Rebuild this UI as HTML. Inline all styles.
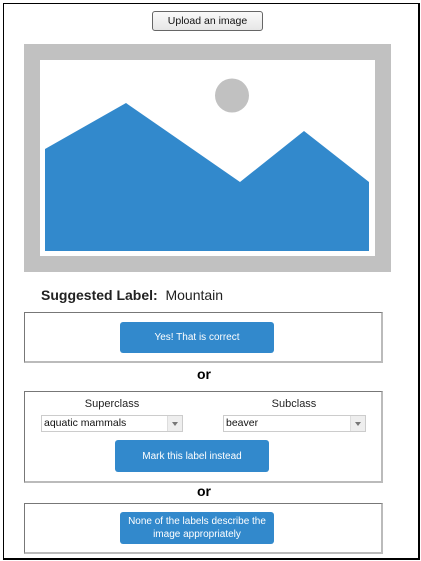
<!DOCTYPE html>
<html><head><style>
body{margin:0;width:421px;height:561px;background:#fff;font-family:"Liberation Sans",sans-serif;position:relative;overflow:hidden}
.a{position:absolute}
.box{position:absolute;left:24px;width:359px;border:1px solid #777;border-right:2px solid #bbb;border-bottom:2px solid #bbb;box-sizing:border-box}
.btn{position:absolute;background:#3289cc;color:#fff;border-radius:3px;font-size:10px;display:flex;align-items:center;justify-content:center;text-align:center;line-height:13px}
.sel{position:absolute;height:17px;border:1px solid #ccc;box-sizing:border-box;font-size:10.5px;line-height:15px;padding-left:2px;color:#111;background:#fff}
.sel:after{content:"";position:absolute;right:0;top:0;width:14px;height:15px;background:#eee;border-left:1px solid #ddd}
.sel i{position:absolute;right:4px;top:6px;width:0;height:0;border-left:3px solid transparent;border-right:3px solid transparent;border-top:4px solid #777;z-index:2}
.or{position:absolute;left:0;width:408px;text-align:center;font-weight:bold;font-size:14px}
</style></head><body>
<div class="a" style="left:3px;top:3px;width:414px;height:554px;border:1px solid #000;border-right:2px solid #000;border-bottom:2px solid #000"></div>
<div class="a" style="left:152px;top:11px;width:111px;height:20px;box-sizing:border-box;border:1px solid #666;border-radius:3px;background:linear-gradient(#fafafa,#e6e6e6);font-size:10.5px;text-align:center;line-height:18px;color:#111">Upload an image</div>
<div class="a" style="left:24px;top:44px;width:367px;height:228px;background:#c1c1c1"></div>
<div class="a" style="left:40px;top:60px;width:335px;height:196px;background:#fff"></div>
<svg class="a" style="left:0;top:0" width="421" height="280">
<circle cx="232" cy="95.5" r="17" fill="#c1c1c1"/>
<polygon points="45,149 126,103 240,182 304,131 369,182 369,251 45,251" fill="#3289cc"/>
</svg>
<div class="a" style="left:41px;top:287px;font-size:14px;color:#222"><b>Suggested Label:</b>&nbsp; Mountain</div>
<div class="box" style="top:312px;height:51px"></div>
<div class="btn" style="left:120px;top:322px;width:154px;height:31px">Yes! That is correct</div>
<div class="or" style="top:366px">or</div>
<div class="box" style="top:391px;height:92px"></div>
<div class="a" style="left:62px;top:398px;width:100px;text-align:center;font-size:11px;color:#222">Superclass</div>
<div class="a" style="left:244px;top:398px;width:100px;text-align:center;font-size:11px;color:#222">Subclass</div>
<div class="sel" style="left:41px;top:415px;width:142px">aquatic mammals<i></i></div>
<div class="sel" style="left:223px;top:415px;width:143px">beaver<i></i></div>
<div class="btn" style="left:115px;top:440px;width:154px;height:32px">Mark this label instead</div>
<div class="or" style="top:483px">or</div>
<div class="box" style="top:503px;height:51px"></div>
<div class="btn" style="left:120px;top:512px;width:154px;height:32px">None of the labels describe the<br>image appropriately</div>
</body></html>
